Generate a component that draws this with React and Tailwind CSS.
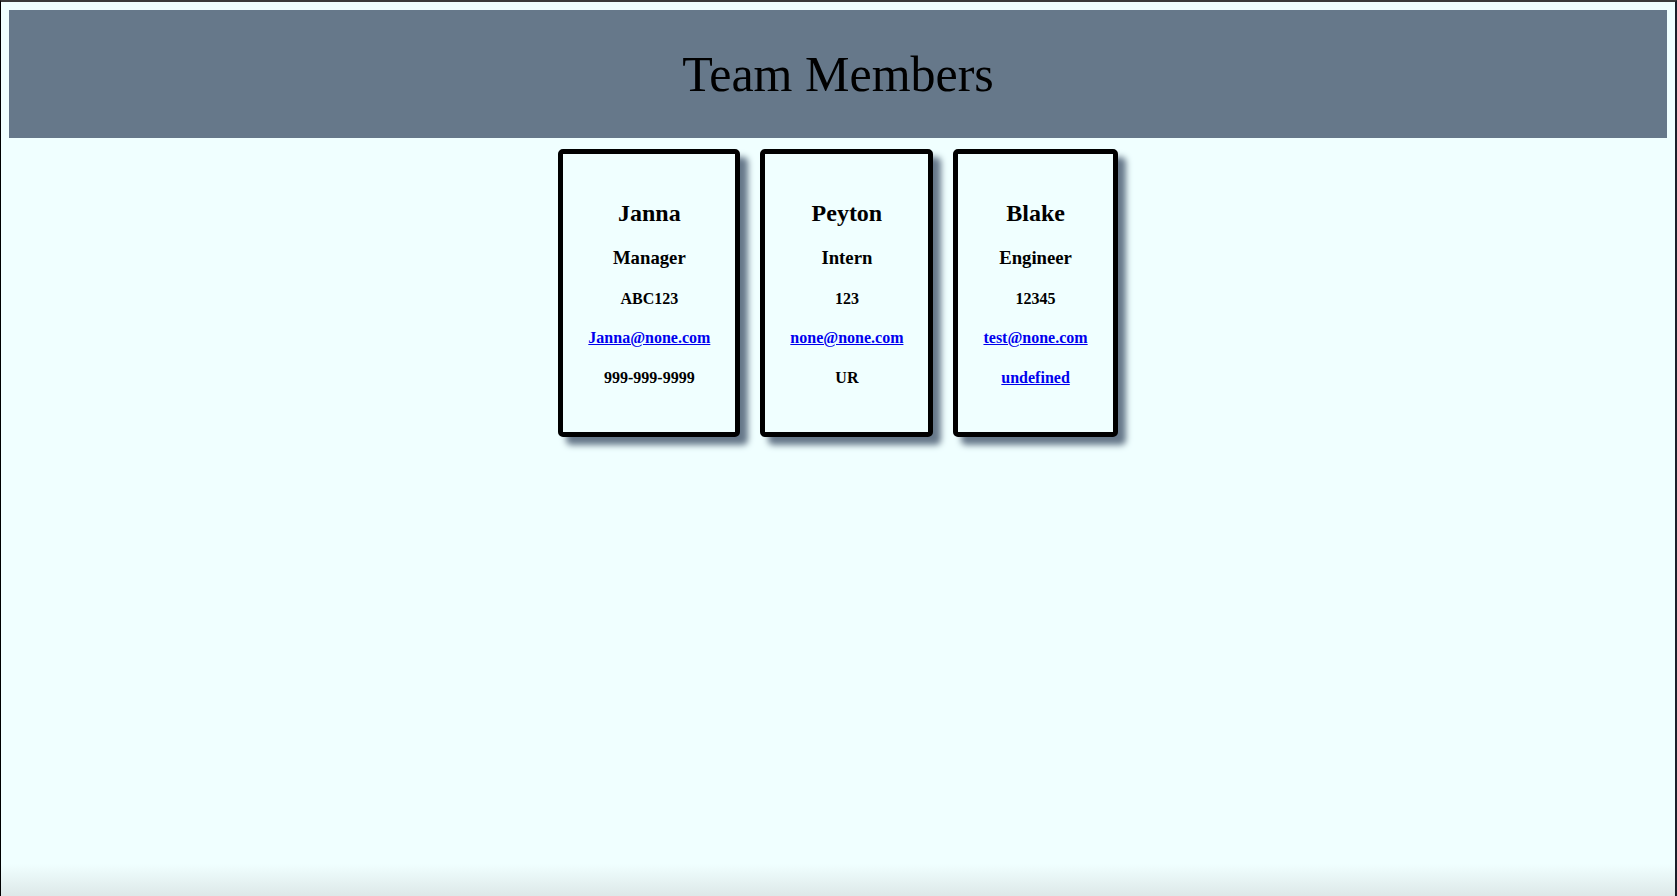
import React from "react";

const members = [
  { name: "Janna", role: "Manager", id: "ABC123", email: "Janna@none.com", extra: "999-999-9999", extraLink: false },
  { name: "Peyton", role: "Intern", id: "123", email: "none@none.com", extra: "UR", extraLink: false },
  { name: "Blake", role: "Engineer", id: "12345", email: "test@none.com", extra: "undefined", extraLink: true },
];

function Card({ m }) {
  return (
    <div className="border-[5px] border-black rounded-[5px] bg-[#f0ffff] pt-[45px] pb-[45px] px-[25px] text-center font-bold text-black shadow-[8px_8px_6px_#66788a] whitespace-nowrap">
      <div className="text-[24px] leading-[28px]">{m.name}</div>
      <div className="mt-[20px] text-[18.72px] leading-[22px]">{m.role}</div>
      <div className="mt-[21px] text-[16px] leading-[18px]">{m.id}</div>
      <div className="mt-[21px] text-[16px] leading-[18px]">
        <a href="#" className="text-[#0000ee] underline">{m.email}</a>
      </div>
      <div className="mt-[22px] text-[16px] leading-[18px]">
        {m.extraLink ? (
          <a href="#" className="text-[#0000ee] underline">{m.extra}</a>
        ) : (
          m.extra
        )}
      </div>
    </div>
  );
}

export default function App() {
  return (
    <div
      className="h-[896px] w-[1677px] overflow-hidden border-t-2 border-l border-r-2 border-t-[#3a3a3a] border-l-black border-r-[#1a1f2a] bg-[linear-gradient(to_bottom,#f0ffff_862px,#dce7e7_896px)]"
      style={{ fontFamily: '"Liberation Serif", "Times New Roman", serif' }}
    >
      <div className="px-[8px] pt-[8px]">
        <header className="h-[128px] bg-[#66788a] flex items-center justify-center">
          <h1 className="text-[50px] leading-[56px] font-normal text-black">Team Members</h1>
        </header>
        <main className="mt-[11px] flex justify-center items-start gap-[20px]">
          {members.map((m) => (
            <Card key={m.name} m={m} />
          ))}
        </main>
      </div>
    </div>
  );
}
